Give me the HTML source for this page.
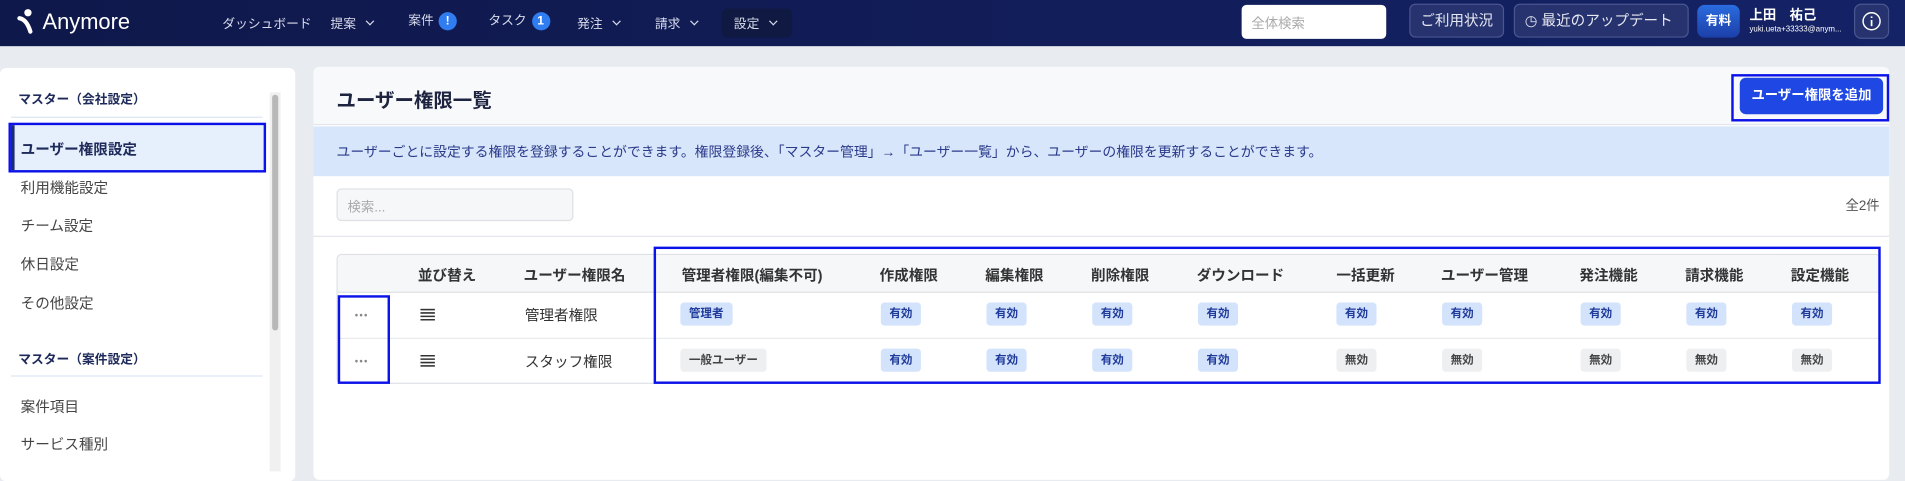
<!DOCTYPE html>
<html><head><meta charset="utf-8"><style>
*{box-sizing:border-box;margin:0;padding:0}
html,body{width:1905px;height:467px;overflow:hidden;background:#e8ebf0}
#w{position:absolute;left:0;top:0;width:1568px;height:385px;transform:scale(1.21492);transform-origin:0 0;font-family:"Liberation Sans","Noto Sans CJK JP",sans-serif;color:#222}
.a{position:absolute;white-space:nowrap}
.nav{position:absolute;left:0;top:0;width:1568px;height:38px;background:linear-gradient(90deg,#0f184a,#142266)}
.nt{color:#d8dcec;font-size:10.5px;top:12px}
.chev{display:inline-block;width:5px;height:5px;border-right:1.2px solid #d8dcec;border-bottom:1.2px solid #d8dcec;transform:rotate(45deg);margin-left:9px;position:relative;top:-3px}
.bub{display:inline-block;width:15px;height:15px;border-radius:50%;background:#2f7df0;color:#fff;font-weight:bold;font-size:10px;text-align:center;line-height:15px;margin-left:4px;vertical-align:middle}
.nb{border:1px solid #4a5690;border-radius:5px;background:#27336e;color:#e6e8f2;font-size:12px;top:3px;height:28px;line-height:26px;padding:0 8px}
.card{position:absolute;background:#fff;border-radius:5px}
.side{color:#444;font-size:12px;left:17px}
.bdg{position:absolute;height:19px;line-height:19px;font-size:9.5px;padding:0 7px;border-radius:3px;font-weight:bold}
.on{background:#d4e3fc;color:#1e3a9a}
.off{background:#eeeff1;color:#444}
.th{font-size:12px;font-weight:bold;color:#333;top:218px}
.box{position:absolute;border:2.5px solid #0b12e8}
</style></head><body><div id="w">
<div class="nav">
 <svg class="a" style="left:14px;top:7px" width="20" height="22"><circle cx="9" cy="3.5" r="3" fill="#fff"/><path d="M2 8 Q8 9 11 19" stroke="#fff" stroke-width="3.5" fill="none" stroke-linecap="round"/></svg>
 <div class="a" style="left:35px;top:8px;color:#fff;font-size:18px">Anymore</div>
 <div class="a nt" style="left:183px">ダッシュボード</div>
 <div class="a nt" style="left:272px">提案<span class="chev"></span></div>
 <div class="a nt" style="left:336px;top:9px">案件<span class="bub">!</span></div>
 <div class="a nt" style="left:402px;top:9px">タスク<span class="bub">1</span></div>
 <div class="a nt" style="left:475px">発注<span class="chev"></span></div>
 <div class="a nt" style="left:539px">請求<span class="chev"></span></div>
 <div class="a" style="left:594px;top:7px;width:58px;height:24px;background:#0f1942;border-radius:5px"></div>
 <div class="a nt" style="left:604px">設定<span class="chev"></span></div>
 <div class="a" style="left:1022px;top:4px;width:119px;height:28px;background:#fff;border-radius:4px;color:#aaa;font-size:11px;padding:7px 8px">全体検索</div>
 <div class="a nb" style="left:1160px;width:78px">ご利用状況</div>
 <div class="a nb" style="left:1246px;width:144px">◷ 最近のアップデート</div>
 <div class="a" style="left:1397px;top:4px;width:35px;height:27px;background:linear-gradient(#2a6ce0,#1c3fa8);border-radius:6px;color:#fff;font-size:10.5px;font-weight:bold;line-height:27px;text-align:center">有料</div>
 <div class="a" style="left:1440px;top:4px;color:#fff;font-size:11px;font-weight:bold">上田　祐己</div>
 <div class="a" style="left:1440px;top:21px;color:#fff;font-size:6.5px">yuki.ueta+33333@anym...</div>
 <div class="a" style="left:1526px;top:3px;width:29px;height:29px;border:1px solid #4a5690;background:#27336e;border-radius:6px"></div>
 <svg class="a" style="left:1531px;top:8px" width="19" height="19"><circle cx="9.5" cy="9.5" r="7" stroke="#fff" stroke-width="1.2" fill="none"/><path d="M9.5 8.5v5M9.5 5.5v1.3" stroke="#fff" stroke-width="1.4"/></svg>
</div>

<div class="card" style="left:0;top:56px;width:243px;height:340px"></div>
<div class="a" style="left:15px;top:74px;font-size:10.5px;font-weight:bold;color:#1e2a5a">マスター（会社設定）</div>
<div class="a" style="left:9px;top:96px;width:207px;height:1px;background:#dbe6f5"></div>
<div class="a" style="left:9px;top:103px;width:208px;height:37px;background:#e6effc;border-left:3px solid #1c2a7a"></div>
<div class="box" style="left:7px;top:101px;width:212px;height:41px"></div>
<div class="a" style="left:17px;top:114px;font-size:12px;font-weight:bold;color:#1e2a5a">ユーザー権限設定</div>
<div class="a side" style="top:146px">利用機能設定</div>
<div class="a side" style="top:177px">チーム設定</div>
<div class="a side" style="top:209px">休日設定</div>
<div class="a side" style="top:241px">その他設定</div>
<div class="a" style="left:15px;top:288px;font-size:10.5px;font-weight:bold;color:#1e2a5a">マスター（案件設定）</div>
<div class="a" style="left:9px;top:309px;width:207px;height:1px;background:#dbe6f5"></div>
<div class="a side" style="top:326px">案件項目</div>
<div class="a side" style="top:357px">サービス種別</div>
<div class="a" style="left:222px;top:76px;width:9px;height:312px;background:#f0f0f0"></div>
<div class="a" style="left:224px;top:78px;width:5px;height:194px;background:#b8b8b8;border-radius:3px"></div>

<div class="card" style="left:258px;top:55px;width:1297px;height:340px;overflow:hidden">
 <div class="a" style="left:0;top:0;width:1297px;height:48px;background:#f8f9fb;border-bottom:1px solid #e2e5ea"></div>
 <div class="a" style="left:0;top:49px;width:1297px;height:41px;background:#d8e6fb"></div>
</div>
<div class="a" style="left:277px;top:69px;font-size:16px;font-weight:bold;color:#1e2440">ユーザー権限一覧</div>
<div class="a" style="left:1432px;top:64px;width:118px;height:30px;background:#1f47e3;border-radius:5px;color:#fff;font-size:11px;font-weight:bold;text-align:center;line-height:30px">ユーザー権限を追加</div>
<div class="box" style="left:1425px;top:61px;width:130px;height:39px"></div>
<div class="a" style="left:277px;top:117px;font-size:11.4px;color:#2a3a8a">ユーザーごとに設定する権限を登録することができます。権限登録後、「マスター管理」→「ユーザー一覧」から、ユーザーの権限を更新することができます。</div>
<div class="a" style="left:277px;top:155px;width:195px;height:27px;border:1px solid #dde0e5;background:#f6f7f9;border-radius:4px;color:#aaa;font-size:11px;padding:6px 8px">検索...</div>
<div class="a" style="left:1519px;top:161px;font-size:11px;color:#555">全2件</div>
<div class="a" style="left:258px;top:194px;width:1297px;height:1px;background:#e3e5e9"></div>

<div class="a" style="left:277px;top:209px;width:1271px;height:107px;border:1px solid #dde0e5;border-radius:4px;background:#fff;overflow:hidden">
 <div class="a" style="left:0;top:0;width:1271px;height:31px;background:#f6f7f9;border-bottom:1px solid #dde0e5"></div>
 <div class="a" style="left:0;top:68px;width:1271px;height:1px;background:#e8eaee"></div>
</div>
<div class="a th" style="left:344px">並び替え</div>
<div class="a th" style="left:431px">ユーザー権限名</div>
<div class="a th" style="left:561px">管理者権限(編集不可)</div>
<div class="a th" style="left:724px">作成権限</div>
<div class="a th" style="left:811px">編集権限</div>
<div class="a th" style="left:898px">削除権限</div>
<div class="a th" style="left:985px">ダウンロード</div>
<div class="a th" style="left:1100px">一括更新</div>
<div class="a th" style="left:1186px">ユーザー管理</div>
<div class="a th" style="left:1300px">発注機能</div>
<div class="a th" style="left:1387px">請求機能</div>
<div class="a th" style="left:1474px">設定機能</div>

<div class="a" style="left:292px;top:255px;font-size:8px;color:#888;letter-spacing:1px">•••</div>
<div class="a" style="left:292px;top:293px;font-size:8px;color:#888;letter-spacing:1px">•••</div>
<svg class="a" style="left:346px;top:254px" width="12" height="10"><path d="M0 .8h12M0 3.6h12M0 6.4h12M0 9.2h12" stroke="#333" stroke-width="1.3"/></svg>
<svg class="a" style="left:346px;top:292px" width="12" height="10"><path d="M0 .8h12M0 3.6h12M0 6.4h12M0 9.2h12" stroke="#333" stroke-width="1.3"/></svg>
<div class="a" style="left:432px;top:251px;font-size:12px;color:#333">管理者権限</div>
<div class="a" style="left:432px;top:289px;font-size:12px;color:#333">スタッフ権限</div>

<div class="bdg on" style="left:560px;top:249px">管理者</div>
<div class="bdg off" style="left:560px;top:287px">一般ユーザー</div>

<div class="bdg on" style="left:725px;top:249px">有効</div><div class="bdg on" style="left:725px;top:287px">有効</div>
<div class="bdg on" style="left:812px;top:249px">有効</div><div class="bdg on" style="left:812px;top:287px">有効</div>
<div class="bdg on" style="left:899px;top:249px">有効</div><div class="bdg on" style="left:899px;top:287px">有効</div>
<div class="bdg on" style="left:986px;top:249px">有効</div><div class="bdg on" style="left:986px;top:287px">有効</div>
<div class="bdg on" style="left:1100px;top:249px">有効</div><div class="bdg off" style="left:1100px;top:287px">無効</div>
<div class="bdg on" style="left:1187px;top:249px">有効</div><div class="bdg off" style="left:1187px;top:287px">無効</div>
<div class="bdg on" style="left:1301px;top:249px">有効</div><div class="bdg off" style="left:1301px;top:287px">無効</div>
<div class="bdg on" style="left:1388px;top:249px">有効</div><div class="bdg off" style="left:1388px;top:287px">無効</div>
<div class="bdg on" style="left:1475px;top:249px">有効</div><div class="bdg off" style="left:1475px;top:287px">無効</div>

<div class="box" style="left:278px;top:243px;width:43px;height:73px"></div>
<div class="box" style="left:538px;top:203px;width:1010px;height:113px"></div>
</div></body></html>
